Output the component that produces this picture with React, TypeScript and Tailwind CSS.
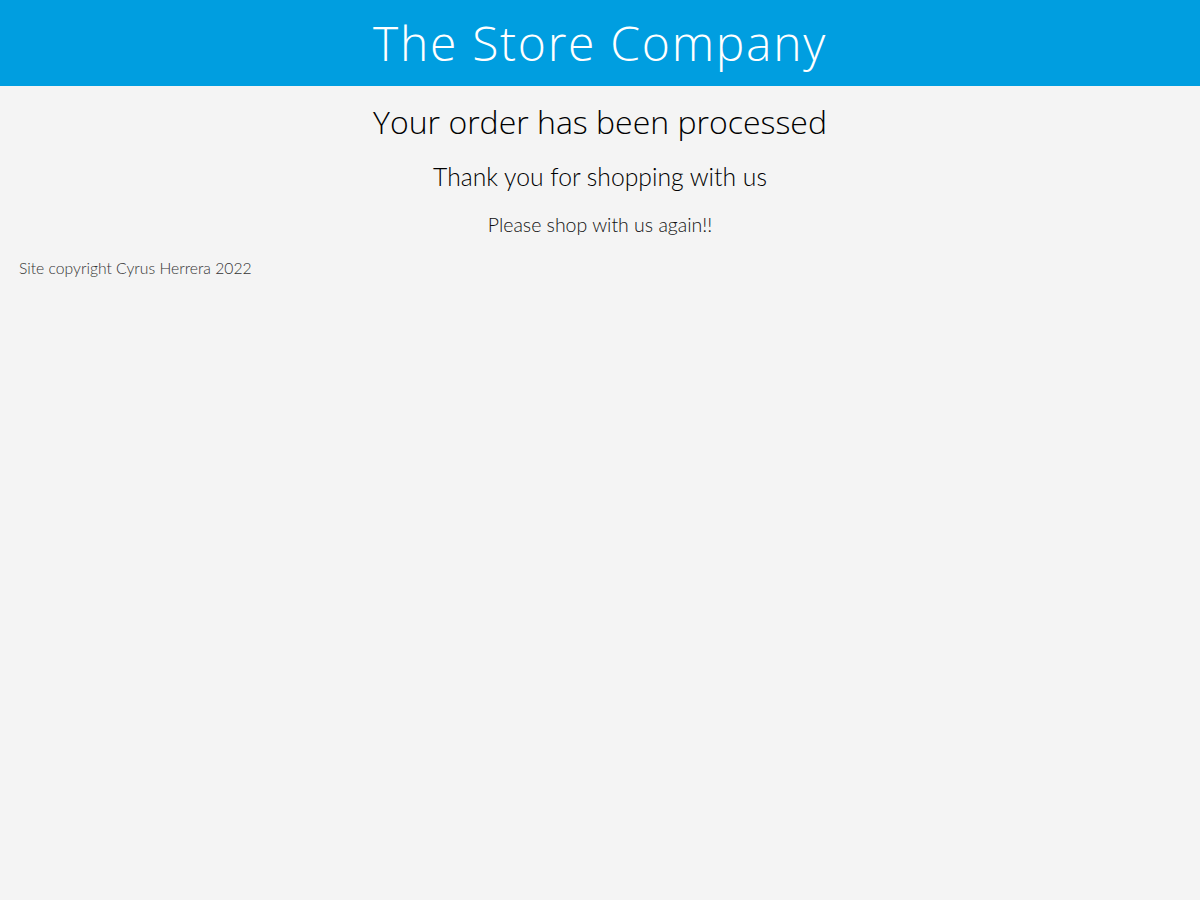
import React from "react";

export default function App() {
  return (
    <div className="min-h-[900px] bg-[#f4f4f4]">
      <header className="h-[86px] bg-[#009ee0] flex items-center justify-center">
        <h1 className="text-white text-[48px] font-light leading-none [font-family:'Open_Sans',sans-serif] tracking-[1.7px]">
          The Store Company
        </h1>
      </header>
      <main className="flex flex-col items-center">
        <h2 className="mt-[18px] text-[32px] leading-[36px] font-light text-black [font-family:'Open_Sans',sans-serif]">
          Your order has been processed
        </h2>
        <h3 className="mt-[22px] text-[24.7px] leading-[30px] font-light text-black [font-family:Lato,sans-serif]">
          Thank you for shopping with us
        </h3>
        <p className="mt-[21px] text-[19.5px] leading-[24px] font-light text-[#111] [font-family:Lato,sans-serif]">
          Please shop with us again!!
        </p>
      </main>
      <footer className="mt-[21px] px-[19px] text-[15.7px] leading-[20px] font-light text-[#333] [font-family:Lato,sans-serif]">
        Site copyright Cyrus Herrera 2022
      </footer>
    </div>
  );
}
